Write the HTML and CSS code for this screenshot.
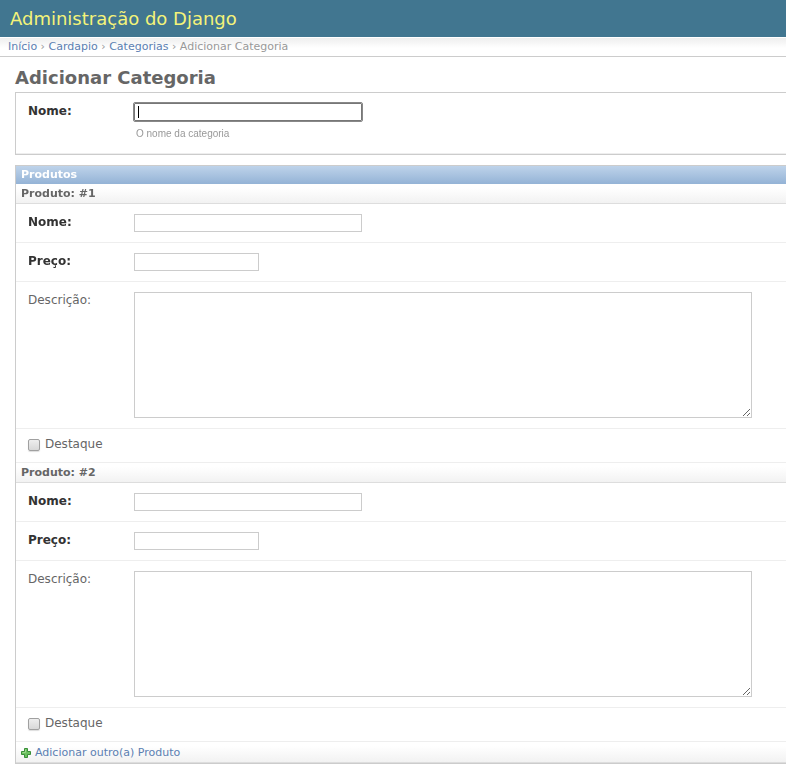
FILE: index.html
```html
<!DOCTYPE html>
<html lang="pt-br">
<head>
<meta charset="utf-8">
<title>Adicionar Categoria</title>
<link rel="stylesheet" href="styles.css">
</head>
<body>
<header class="header">Administração do Django</header>
<nav class="breadcrumbs"><a href="#">Início</a> › <a href="#">Cardapio</a> › <a href="#">Categorias</a> › Adicionar Categoria</nav>
<main class="content">
<h1>Adicionar Categoria</h1>
<form>
<section class="module">
<div class="row">
<label class="required" for="nome">Nome:</label>
<div class="field">
<input class="text" type="text" id="nome" placeholder=" " autofocus>
<p class="help">O nome da categoria</p>
</div>
</div>
</section>
<section class="module group">
<h2>Produtos</h2>
<h3>Produto: #1</h3>
<div class="row"><label class="required" for="nome-1">Nome:</label><input class="text" type="text" id="nome-1"></div>
<div class="row"><label class="required" for="preco-1">Preço:</label><input class="text short" type="text" id="preco-1"></div>
<div class="row"><label for="descricao-1">Descrição:</label><textarea id="descricao-1"></textarea></div>
<div class="row check"><input type="checkbox" id="destaque-1"><label for="destaque-1">Destaque</label></div>
<h3>Produto: #2</h3>
<div class="row"><label class="required" for="nome-2">Nome:</label><input class="text" type="text" id="nome-2"></div>
<div class="row"><label class="required" for="preco-2">Preço:</label><input class="text short" type="text" id="preco-2"></div>
<div class="row"><label for="descricao-2">Descrição:</label><textarea id="descricao-2"></textarea></div>
<div class="row check"><input type="checkbox" id="destaque-2"><label for="destaque-2">Destaque</label></div>
<div class="add-row"><a href="#"><svg width="10" height="10" viewBox="0 0 10 10" aria-hidden="true"><path d="M3.5.5h3v3h3v3h-3v3h-3v-3h-3v-3h3z" fill="#6cc05f" stroke="#398f38"/><path d="M4.500 1.500v3h-3" fill="none" stroke="#9bd98c"/></svg>Adicionar outro(a) Produto</a></div>
</section>
</form>
</main>
</body>
</html>
```
FILE: styles.css
```css
* {
  box-sizing: border-box;
}

body {
  margin: 0;
  background: #fff;
  color: #666;
  font: 12px/16px "DejaVu Sans", sans-serif;
}

a {
  color: #5b80b2;
  text-decoration: none;
}

.header {
  padding: 8px 10px 7px;
  background: #417690;
  color: #f4f379;
  font-size: 18px;
  line-height: 22px;
}

.breadcrumbs {
  padding: 2px 8px 3px;
  border-top: 1px solid #fff;
  border-bottom: 1px solid #ccc;
  background: linear-gradient(#eee, #fff 10px);
  color: #999;
  font-size: 11px;
  line-height: 13px;
}

.content {
  padding: 10px 0 0 15px;
}

h1 {
  margin: 0 0 3px;
  font-size: 18px;
  line-height: 22px;
}

.module {
  border: 1px solid #ccc;
  border-right: 0;
}

.group {
  margin-top: 10px;
}

h2,
h3 {
  margin: 0;
  padding: 2px 5px 3px;
  font-size: 11px;
  line-height: 13px;
}

h2 {
  background: linear-gradient(#bed3ea, #94b3d6);
  color: #fff;
}

h3 {
  padding-top: 3px;
  border-bottom: 1px solid #ddd;
  background: linear-gradient(#fff 20%, #f2f2f2);
}

.row {
  display: flex;
  align-items: flex-start;
  padding: 10px 12px;
  border-bottom: 1px solid #eee;
}

.row > label {
  flex: 0 0 106px;
}

.row > .required {
  color: #333;
  font-weight: bold;
}

.text,
textarea {
  display: block;
  margin: 0;
  border: 1px solid #ccc;
  border-radius: 0;
  background: #fff;
  color: #000;
  font: 12px/14px "DejaVu Sans", sans-serif;
}

.text {
  width: 228px;
  height: 18px;
  padding: 1px 3px;
}

.text:focus {
  border-color: #777;
  outline: 1px solid #888;
  border-radius: 1px;
}

/* Steady caret while the focused field is empty */
.text:focus:placeholder-shown {
  background: linear-gradient(#000, #000) 3px 2px / 1px 12px no-repeat #fff;
  caret-color: transparent;
}

.short {
  width: 125px;
}

textarea {
  width: 618px;
  height: 126px;
  resize: both;
}

.help {
  margin: 0;
  padding: 7px 2px 3px;
  color: #999;
  font: 10px/12px "Liberation Sans", sans-serif;
}

.check {
  gap: 5px;
  padding: 7px 12px 10px;
}

.row.check > label {
  flex: none;
}

input[type="checkbox"] {
  appearance: none;
  width: 12px;
  height: 12px;
  margin: 3px 0 0;
  border: 1px solid #a0a0a0;
  border-radius: 2px;
  background: linear-gradient(#eee, #d8d8d8);
  box-shadow: 0 1px 1px #ddd;
}

input[type="checkbox"]:checked {
  background: #5b80b2;
}

.add-row {
  padding: 4px 5px 3px;
  border-bottom: 1px solid #ddd;
  background: linear-gradient(#fff 20%, #f2f2f2);
  font-size: 11px;
  line-height: 13px;
}

.add-row a {
  display: flex;
  align-items: center;
  gap: 4px;
}
```
